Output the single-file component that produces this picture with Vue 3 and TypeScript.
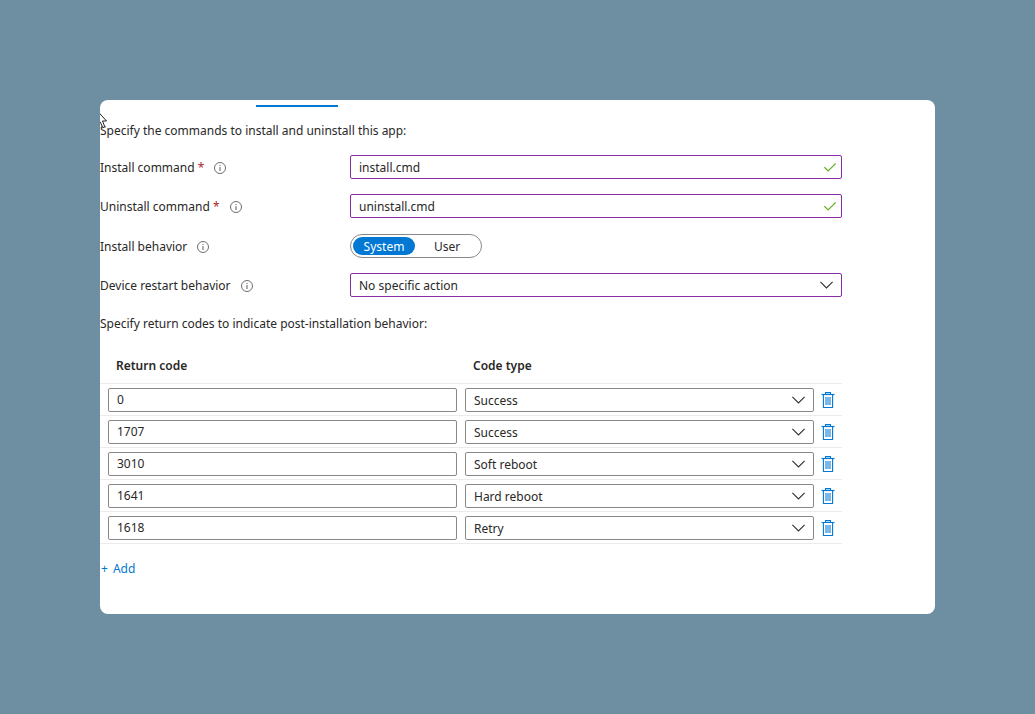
<script setup lang="ts">
import { ref } from 'vue'

interface ReturnCode {
  id: number
  code: string
  type: string
}

const codeTypes = ['Success', 'Soft reboot', 'Hard reboot', 'Retry', 'Failed']
const installCommand = ref('install.cmd')
const uninstallCommand = ref('uninstall.cmd')
const behavior = ref('System')
const restart = ref('No specific action')

const rows = ref<ReturnCode[]>([
  { id: 1, code: '0', type: 'Success' },
  { id: 2, code: '1707', type: 'Success' },
  { id: 3, code: '3010', type: 'Soft reboot' },
  { id: 4, code: '1641', type: 'Hard reboot' },
  { id: 5, code: '1618', type: 'Retry' },
])
let nextId = 6

function addRow() {
  rows.value.push({ id: nextId++, code: '', type: 'Success' })
}

function removeRow(id: number) {
  rows.value = rows.value.filter((row) => row.id !== id)
}
</script>

<template>
  <svg class="symbols" width="0" height="0" aria-hidden="true">
    <symbol id="icon-info" viewBox="0 0 12 12">
      <circle cx="6" cy="6" r="5.5" fill="none" stroke="#605e5c" stroke-width="0.9" />
      <path d="M6 5v4M6 3v1" fill="none" stroke="#605e5c" stroke-width="1" />
    </symbol>
    <symbol id="icon-check" viewBox="0 0 12 9">
      <path d="M0.4 4.2L4.2 8L11.7 0.5" fill="none" stroke="#6bb02a" stroke-width="1.2" />
    </symbol>
    <symbol id="icon-chevron" viewBox="0 0 13 8">
      <path d="M0.4 0.8L6.5 6.9L12.6 0.8" fill="none" stroke="#323130" stroke-width="1.1" />
    </symbol>
    <symbol id="icon-trash" viewBox="0 0 14 16">
      <path d="M4.5 2.5V0.6H9.5V2.5" fill="none" stroke="#0078d4" stroke-width="1.1" />
      <path d="M0.5 2.5H13.5" fill="none" stroke="#0078d4" stroke-width="1.2" />
      <path d="M2.4 2.5V15.5H11.6V2.5" fill="none" stroke="#0078d4" stroke-width="1.1" />
      <rect x="4" y="5" width="6" height="8" fill="#7ab7eb" />
    </symbol>
  </svg>

  <main class="page">
    <section class="card">
      <svg class="pointer" viewBox="0 0 8 17" aria-hidden="true">
        <path d="M-4 -3.5L6.5 8H2.5L4.8 13.8L2.8 14.7L0.4 9.2L-4 13" fill="#fff" stroke="#222" stroke-width="1" />
      </svg>
      <div class="tab-track"><span class="tab-line"></span></div>

      <div class="content">
        <p class="intro">Specify the commands to install and uninstall this app:</p>

        <form class="form" @submit.prevent>
          <div class="field">
            <div class="caption">
              <label for="install">Install command <span class="star">*</span></label>
              <svg class="info" aria-hidden="true"><use href="#icon-info" /></svg>
            </div>
            <div class="control">
              <input id="install" v-model="installCommand" class="box accent" type="text" required />
              <svg class="check" aria-hidden="true"><use href="#icon-check" /></svg>
            </div>
          </div>
          <div class="field">
            <div class="caption">
              <label for="uninstall">Uninstall command <span class="star">*</span></label>
              <svg class="info" aria-hidden="true"><use href="#icon-info" /></svg>
            </div>
            <div class="control">
              <input id="uninstall" v-model="uninstallCommand" class="box accent" type="text" required />
              <svg class="check" aria-hidden="true"><use href="#icon-check" /></svg>
            </div>
          </div>
          <div class="field">
            <div class="caption">
              <span id="behavior-label">Install behavior</span>
              <svg class="info" aria-hidden="true"><use href="#icon-info" /></svg>
            </div>
            <div class="toggle" role="radiogroup" aria-labelledby="behavior-label">
              <label v-for="option in ['System', 'User']" :key="option" class="option">
                <input v-model="behavior" class="radio" type="radio" name="behavior" :value="option" />
                <span class="pill">{{ option }}</span>
              </label>
            </div>
          </div>
          <div class="field">
            <div class="caption">
              <label for="restart">Device restart behavior</label>
              <svg class="info" aria-hidden="true"><use href="#icon-info" /></svg>
            </div>
            <div class="control">
              <select id="restart" v-model="restart" class="box list accent">
                <option>No specific action</option>
              </select>
              <svg class="chevron" aria-hidden="true"><use href="#icon-chevron" /></svg>
            </div>
          </div>
        </form>

        <p class="note">Specify return codes to indicate post-installation behavior:</p>

        <table class="codes">
          <thead>
            <tr>
              <th id="col-code" scope="col">Return code</th>
              <th id="col-type" scope="col">Code type</th>
              <td class="action"></td>
            </tr>
          </thead>
          <tbody>
            <tr v-for="row in rows" :key="row.id">
              <td><input v-model="row.code" class="box code" type="text" aria-labelledby="col-code" /></td>
              <td>
                <div class="control">
                  <select v-model="row.type" class="box list" aria-labelledby="col-type">
                    <option v-for="type in codeTypes" :key="type">{{ type }}</option>
                  </select>
                  <svg class="chevron" aria-hidden="true"><use href="#icon-chevron" /></svg>
                </div>
              </td>
              <td class="action">
                <button class="remove" type="button" aria-label="Delete" @click="removeRow(row.id)">
                  <svg class="trash" aria-hidden="true"><use href="#icon-trash" /></svg>
                </button>
              </td>
            </tr>
          </tbody>
        </table>

        <button class="add" type="button" @click="addRow"><span>+</span><span>Add</span></button>
      </div>
    </section>
  </main>
</template>

<style>
body {
  background: #6e8fa2;
}
</style>

<style scoped>
.symbols {
  position: absolute;
}

.page {
  box-sizing: border-box;
  display: flex;
  min-height: 100vh;
  padding: 100px;
  color: #292827;
  font: 12px/20px "Noto Sans", sans-serif;
}

.card {
  position: relative;
  flex: 1;
  min-width: 0;
  overflow: hidden;
  border-radius: 8px;
  background: #fff;
}

.pointer {
  position: absolute;
  top: 13px;
  left: 0;
  width: 8px;
  height: 17px;
}

.tab-track {
  display: flex;
  padding: 5px 0 0 156px;
}

.tab-line {
  width: 82px;
  height: 2px;
  background: #0078d4;
}

.content {
  padding: 14px 93px 32px 0;
}

.intro,
.note {
  margin: 0;
}

.form {
  display: flex;
  flex-direction: column;
  justify-content: space-between;
  min-height: 142px;
  margin: 14px 0 17px;
}

.field {
  display: grid;
  grid-template-columns: 250px 1fr;
  align-items: center;
  min-height: 24px;
}

.caption {
  display: flex;
  align-items: center;
  gap: 10px;
  padding-top: 2px;
}

.star {
  color: #a4262c;
}

.info {
  width: 12px;
  height: 12px;
}

.control {
  display: grid;
  align-items: center;
}

.control > * {
  grid-area: 1 / 1;
}

.box {
  box-sizing: border-box;
  display: block;
  width: 100%;
  height: 24px;
  margin: 0;
  padding: 0 8px;
  border: 1px solid #8a8886;
  border-radius: 2px;
  outline: none;
  appearance: none;
  background: #fff;
  color: inherit;
  font: inherit;
}

.accent {
  border-color: #8a2da5;
}

.code {
  padding-bottom: 2px;
}

.list {
  padding-top: 2px;
}

.check,
.chevron {
  justify-self: end;
  pointer-events: none;
}

.check {
  width: 12px;
  height: 9px;
  margin-right: 6px;
}

.chevron {
  width: 13px;
  height: 8px;
  margin-right: 9px;
}

.toggle {
  box-sizing: border-box;
  display: flex;
  justify-self: start;
  height: 24px;
  padding: 2px;
  border: 1px solid #8a8886;
  border-radius: 12px;
}

.option {
  display: flex;
  cursor: pointer;
}

.radio {
  width: 0;
  height: 0;
  margin: 0;
  appearance: none;
}

.pill {
  min-width: 62px;
  height: 18px;
  border-radius: 9px;
  line-height: 20px;
  text-align: center;
}

.option + .option .pill {
  min-width: 64px;
}

.radio:checked + .pill {
  background: #0078d4;
  color: #fff;
}

.codes {
  width: 100%;
  margin-top: 14px;
  border-collapse: separate;
  border-spacing: 0;
  table-layout: fixed;
}

.codes th,
.codes td {
  border-bottom: 1px solid #edebe9;
}

.codes th {
  height: 35px;
  padding: 0 0 0 16px;
  font-weight: 600;
  text-align: left;
}

.codes td {
  height: 24px;
  padding: 4px 0 3px 8px;
}

.codes .action {
  width: 21px;
  padding-left: 7px;
}

.remove {
  display: block;
  padding: 0;
  border: 0;
  background: none;
  cursor: pointer;
}

.trash {
  display: block;
  width: 14px;
  height: 16px;
}

.add {
  display: flex;
  gap: 5px;
  margin-top: 15px;
  padding: 0 1px;
  border: 0;
  background: none;
  color: #0078d4;
  font: inherit;
  cursor: pointer;
}
</style>
